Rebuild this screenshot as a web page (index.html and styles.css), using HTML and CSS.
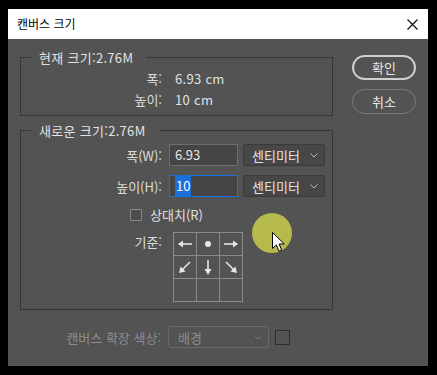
FILE: index.html
```html
<!DOCTYPE html>
<html lang="ko">
<head>
<meta charset="utf-8">
<link rel="stylesheet" href="styles.css">
</head>
<body>
<div class="dialog">
  <div class="titlebar">
    <span class="title">캔버스 크기</span>
    <svg class="close" width="11" height="11" viewBox="0 0 11 11"><path d="M0.5 0.5L10.5 10.5M10.5 0.5L0.5 10.5" stroke="#111" stroke-width="1.2" fill="none"/></svg>
  </div>
  <div class="content">
    <div class="main">
      <div class="group group1">
        <div class="legend">현재 크기:2.76M</div>
        <div class="row info first">
          <span class="label">폭:</span><span class="value">6.93 cm</span>
        </div>
        <div class="row info">
          <span class="label">높이:</span><span class="value">10 cm</span>
        </div>
      </div>
      <div class="group group2">
        <div class="legend">새로운 크기:2.76M</div>
        <div class="row field first">
          <span class="label">폭(W):</span>
          <div class="input">6.93</div>
          <div class="select"><span>센티미터</span><svg class="chev" width="8" height="5" viewBox="0 0 8 5"><path d="M0.5 0.5L4 4L7.5 0.5" stroke="#bbb" fill="none"/></svg></div>
        </div>
        <div class="row field">
          <span class="label">높이(H):</span>
          <div class="input focus"><span class="sel">10</span></div>
          <div class="select"><span>센티미터</span><svg class="chev" width="8" height="5" viewBox="0 0 8 5"><path d="M0.5 0.5L4 4L7.5 0.5" stroke="#bbb" fill="none"/></svg></div>
        </div>
        <div class="row check">
          <span class="box"></span><span class="checklabel">상대치(R)</span>
        </div>
        <div class="row anchor">
          <span class="label">기준:</span>
          <div class="grid">
            <div class="cell"><svg width="22" height="22" viewBox="0 0 22 22"><path d="M5 11H18" stroke="#e6e6e6" stroke-width="1.6"/><path d="M4 11L9 7.5V14.5Z" fill="#e6e6e6"/></svg></div>
            <div class="cell"><svg width="22" height="22" viewBox="0 0 22 22"><circle cx="11" cy="11" r="3" fill="#e6e6e6"/></svg></div>
            <div class="cell"><svg width="22" height="22" viewBox="0 0 22 22"><path d="M4 11H17" stroke="#e6e6e6" stroke-width="1.6"/><path d="M18 11L13 7.5V14.5Z" fill="#e6e6e6"/></svg></div>
            <div class="cell"><svg width="22" height="22" viewBox="0 0 22 22"><path d="M16 6L8 14" stroke="#e6e6e6" stroke-width="1.6"/><path d="M5 17L6.5 10.5L11.5 15.5Z" fill="#e6e6e6"/></svg></div>
            <div class="cell"><svg width="22" height="22" viewBox="0 0 22 22"><path d="M11 4V15" stroke="#e6e6e6" stroke-width="1.6"/><path d="M11 19L7.5 13H14.5Z" fill="#e6e6e6"/></svg></div>
            <div class="cell"><svg width="22" height="22" viewBox="0 0 22 22"><path d="M6 6L14 14" stroke="#e6e6e6" stroke-width="1.6"/><path d="M17 17L10.5 15.5L15.5 10.5Z" fill="#e6e6e6"/></svg></div>
            <div class="cell"></div>
            <div class="cell"></div>
            <div class="cell"></div>
          </div>
        </div>
        <div class="highlight"></div>
        <svg class="cursor" width="14" height="21" viewBox="0 0 14 21"><path d="M0.5 0.5V16.5L4.3 12.9L6.9 19.2L9.6 18.1L7.1 12H12.3Z" fill="#fff" stroke="#000" stroke-width="1" stroke-linejoin="round"/></svg>
      </div>
      <div class="row bottom">
        <span class="blabel">캔버스 확장 색상:</span>
        <div class="select disabled"><span>배경</span><svg class="chev" width="8" height="5" viewBox="0 0 8 5"><path d="M0.5 0.5L4 4L7.5 0.5" stroke="#777" fill="none"/></svg></div>
        <span class="swatch"></span>
      </div>
    </div>
    <div class="side">
      <div class="btn primary">확인</div>
      <div class="btn">취소</div>
    </div>
  </div>
</div>
</body>
</html>
```

FILE: styles.css
```css
* { box-sizing: border-box; }
html, body { margin: 0; padding: 0; background: #000; }
body {
  width: 437px;
  height: 375px;
  overflow: hidden;
  font-family: "Noto Sans CJK KR", "Noto Sans", sans-serif;
  font-size: 13px;
  color: #dedede;
}
.dialog {
  width: 420px;
  height: 357px;
  margin: 9px 0 0 8px;
  background: #535353;
  display: flex;
  flex-direction: column;
}
.titlebar {
  height: 30px;
  background: #fff;
  display: flex;
  align-items: center;
  justify-content: space-between;
  padding: 0 10px 0 9px;
  flex: none;
}
.title {
  font-size: 12px;
  color: #000;
  line-height: 16px;
}
.close { display: block; }
.content {
  display: flex;
  padding: 18px 12px 0 12px;
}
.main { width: 313px; display: flex; flex-direction: column; }
.group {
  border: 1px solid #363636;
  position: relative;
}
.group1 { height: 59px; }
.group2 { height: 180px; margin-top: 14px; }
.legend {
  margin: -9px 0 0 10px;
  padding: 0 13px 0 8px;
  background: #535353;
  width: fit-content;
  line-height: 17px;
  height: 17px;
  color: #e2e2e2;
  letter-spacing: 0.3px;
}
.row { display: flex; align-items: center; }
.label {
  width: 141px;
  text-align: right;
  flex: none;
  color: #dcdcdc;
}
.info { height: 21px; line-height: 21px; }
.info.first { margin-top: 2px; }
.value { margin-left: 13px; color: #dfe3e8; letter-spacing: 0.3px; }
.field { height: 22px; }
.field.first { margin-top: 5px; }
.field + .field { margin-top: 9px; }
.input {
  margin-left: 7px;
  width: 69px;
  height: 22px;
  background: #454545;
  border: 1px solid #6e6e6e;
  padding-left: 5px;
  line-height: 20px;
  color: #e8e8e8;
}
.input.focus { border-color: #1473e6; }
.sel {
  background: #1a6fd8;
  color: #fff;
  padding: 1px 1px;
}
.select {
  margin-left: 5px;
  width: 82px;
  height: 22px;
  background: #474747;
  border: 1px solid #3a3a3a;
  border-radius: 2px;
  display: flex;
  align-items: center;
  justify-content: space-between;
  padding: 0 6px 0 8px;
  color: #e4e4e4;
}
.chev { display: block; margin-top: 1px; }
.check { height: 17px; margin-top: 9px; }
.box {
  margin-left: 109px;
  width: 12px;
  height: 12px;
  border: 1px solid #888;
  border-radius: 1px;
  background: #4c4c4c;
}
.checklabel { margin-left: 8px; color: #e0e0e0; }
.anchor { align-items: flex-start; margin-top: 9px; }
.anchor .label { margin-top: 1px; line-height: 18px; }
.grid {
  margin-left: 11px;
  display: grid;
  grid-template-columns: repeat(3, 22px);
  grid-template-rows: repeat(3, 22px);
  gap: 1px;
  border: 1px solid #8a8a8a;
  background: #8a8a8a;
}
.cell { background: #535353; }
.cell svg { display: block; }
.highlight {
  position: absolute;
  left: 231px;
  top: 82px;
  width: 40px;
  height: 40px;
  border-radius: 50%;
  background: #b6b94c;
}
.cursor {
  position: absolute;
  left: 251px;
  top: 101px;
}
.bottom { margin-top: 16px; height: 22px; }
.blabel {
  width: 142px;
  text-align: right;
  color: #8c8c8c;
  flex: none;
  padding-right: 1px;
}
.select.disabled {
  margin-left: 6px;
  width: 101px;
  background: #535353;
  border: 1px solid #6a6a6a;
  border-radius: 3px;
  color: #8c8c8c;
  padding: 0 6px 0 9px;
}
.swatch {
  margin-left: 6px;
  width: 15px;
  height: 15px;
  border: 1px solid #2e2e2e;
}
.side {
  margin-left: 19px;
  margin-top: -2px;
  width: 64px;
  display: flex;
  flex-direction: column;
  gap: 9px;
}
.btn {
  height: 25px;
  border: 1.5px solid #7a7a7a;
  border-radius: 13px;
  display: flex;
  align-items: center;
  justify-content: center;
  color: #e8e8e8;
  font-size: 13px;
}
.btn.primary { border: 2px solid #cfcfcf; }
```
